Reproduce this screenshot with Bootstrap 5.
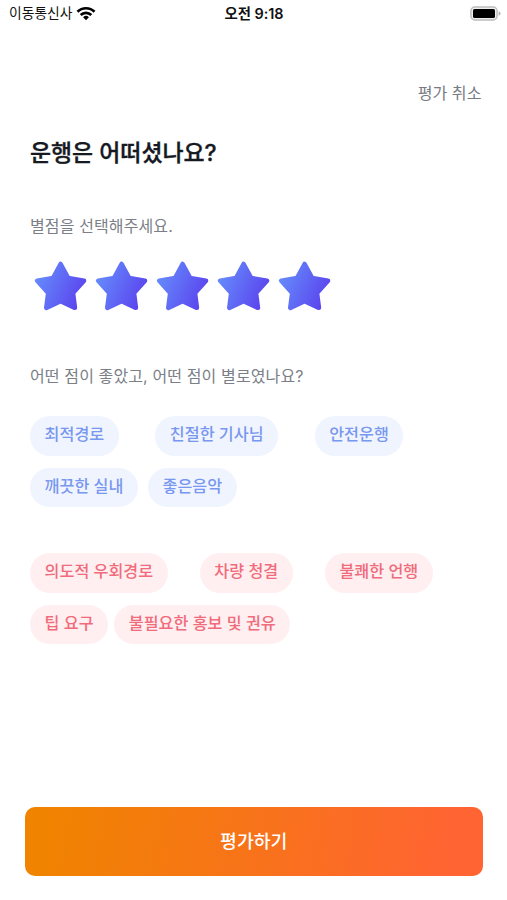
<!DOCTYPE html>
<html lang="ko">
<head>
<meta charset="utf-8">
<meta name="viewport" content="width=device-width, initial-scale=1">
<title>운행 평가</title>
<link href="https://cdn.jsdelivr.net/npm/bootstrap@5.3.0/dist/css/bootstrap.min.css" rel="stylesheet">
<style>
body{font-family:Inter,"Noto Sans CJK KR",sans-serif;color:#16191f;background:#fff}
.screen{height:900px;width:507px}
.statusbar{height:28px;padding:0 6px 1px 9px;color:#111;line-height:27px;font-size:13.8px}
.statusbar>div{flex:1 1 0}
.clock{font-size:14.4px;font-weight:600;padding-right:2px;white-space:nowrap}
.content{padding:0 25.5px 0 30px}
.cancel{margin-top:50px;line-height:30px;font-size:16.1px;color:#777b83}
.headline{margin:28px 0 0;line-height:34px;font-size:22.9px;font-weight:500;-webkit-text-stroke:.35px}
.hint{font-size:16px;line-height:24px;color:#7b7f87;letter-spacing:.12px}
.rating-hint{margin-top:44px}
.reason-hint{margin-top:46px}
.stars{margin-top:18px;height:62px}
.chips{row-gap:12px}
.chips-good{margin-top:28px}
.chips-bad{margin-top:46px}
.chip{height:39.5px;line-height:37px;padding:0 14.6px;font-size:16.2px;font-weight:500;white-space:nowrap}
.good{background:#f0f4ff;color:#7897ee}
.bad{background:#ffeff0;color:#f06b7b}
.submit{margin:0 24.5px 24.5px 25px;height:68.5px;border:0;border-radius:10px;background:linear-gradient(100deg,#f08300 5%,#ff6432 92%);color:#fff;font-size:18.3px;font-weight:500;line-height:66px;padding:0}
</style>
</head>
<body>
<svg width="0" height="0" class="position-absolute" aria-hidden="true">
<defs>
<linearGradient id="violet" gradientUnits="userSpaceOnUse" x1="10" y1="19" x2="54" y2="39"><stop offset="0" stop-color="#6487fa"/><stop offset="1" stop-color="#5b44ee"/></linearGradient>
<symbol id="star" viewBox="0 0 61 62"><path d="M30.6 8 38.2 22 54 24.7 43 37 44.9 51.8 30.6 45.2 16.3 51.8 18.2 37 7.2 24.7 23 22Z" fill="url(#violet)" stroke="url(#violet)" stroke-width="4.6" stroke-linejoin="round"/></symbol>
</defs>
</svg>
<main class="screen d-flex flex-column">
<header class="statusbar d-flex align-items-center">
<div class="d-flex align-items-center"><span>이동통신사</span>
<svg class="ms-1" width="20" height="15" viewBox="0 0 20 15" aria-label="Wi-Fi"><g fill="none" stroke="#000" stroke-width="2.7"><path d="M1.5 5.8a12 12 0 0 1 17 0"/><path d="M4.7 9a7.5 7.5 0 0 1 10.6 0"/></g><path d="M10 14.2 7.1 11.3a4.1 4.1 0 0 1 5.8 0Z"/></svg></div>
<div class="clock text-center">오전 9:18</div>
<div class="d-flex justify-content-end"><svg width="31" height="15" viewBox="0 0 31 15" aria-label="배터리"><rect x=".9" y="1" width="26.2" height="13" rx="4" fill="#eee" stroke="#bdbdbd" stroke-width="1.5"/><rect x="3" y="3" width="22" height="9" rx="1.5" fill="#000"/><path d="M28.6 5.2q2 .6 2 2.3t-2 2.3Z" fill="#b5b5b5"/></svg></div>
</header>
<section class="content">
<div class="cancel text-end">평가 취소</div>
<h1 class="headline">운행은 어떠셨나요?</h1>
<p class="hint rating-hint mb-0">별점을 선택해주세요.</p>
<div class="stars d-flex">
<svg width="61" height="62"><use href="#star"/></svg><svg width="61" height="62"><use href="#star"/></svg><svg width="61" height="62"><use href="#star"/></svg><svg width="61" height="62"><use href="#star"/></svg><svg width="61" height="62"><use href="#star"/></svg>
</div>
<p class="hint reason-hint mb-0">어떤 점이 좋았고, 어떤 점이 별로였나요?</p>
<div class="chips chips-good d-flex flex-column">
<div class="d-flex" style="gap:36.5px"><span class="chip good rounded-pill">최적경로</span><span class="chip good rounded-pill">친절한 기사님</span><span class="chip good rounded-pill">안전운행</span></div>
<div class="d-flex" style="gap:10px"><span class="chip good rounded-pill">깨끗한 실내</span><span class="chip good rounded-pill">좋은음악</span></div>
</div>
<div class="chips chips-bad d-flex flex-column">
<div class="d-flex" style="gap:32px"><span class="chip bad rounded-pill">의도적 우회경로</span><span class="chip bad rounded-pill">차량 청결</span><span class="chip bad rounded-pill">불쾌한 언행</span></div>
<div class="d-flex" style="gap:6px"><span class="chip bad rounded-pill">팁 요구</span><span class="chip bad rounded-pill">불필요한 홍보 및 권유</span></div>
</div>
</section>
<button type="button" class="submit btn mt-auto">평가하기</button>
</main>
<script src="https://cdn.jsdelivr.net/npm/bootstrap@5.3.0/dist/js/bootstrap.bundle.min.js"></script>
</body>
</html>
